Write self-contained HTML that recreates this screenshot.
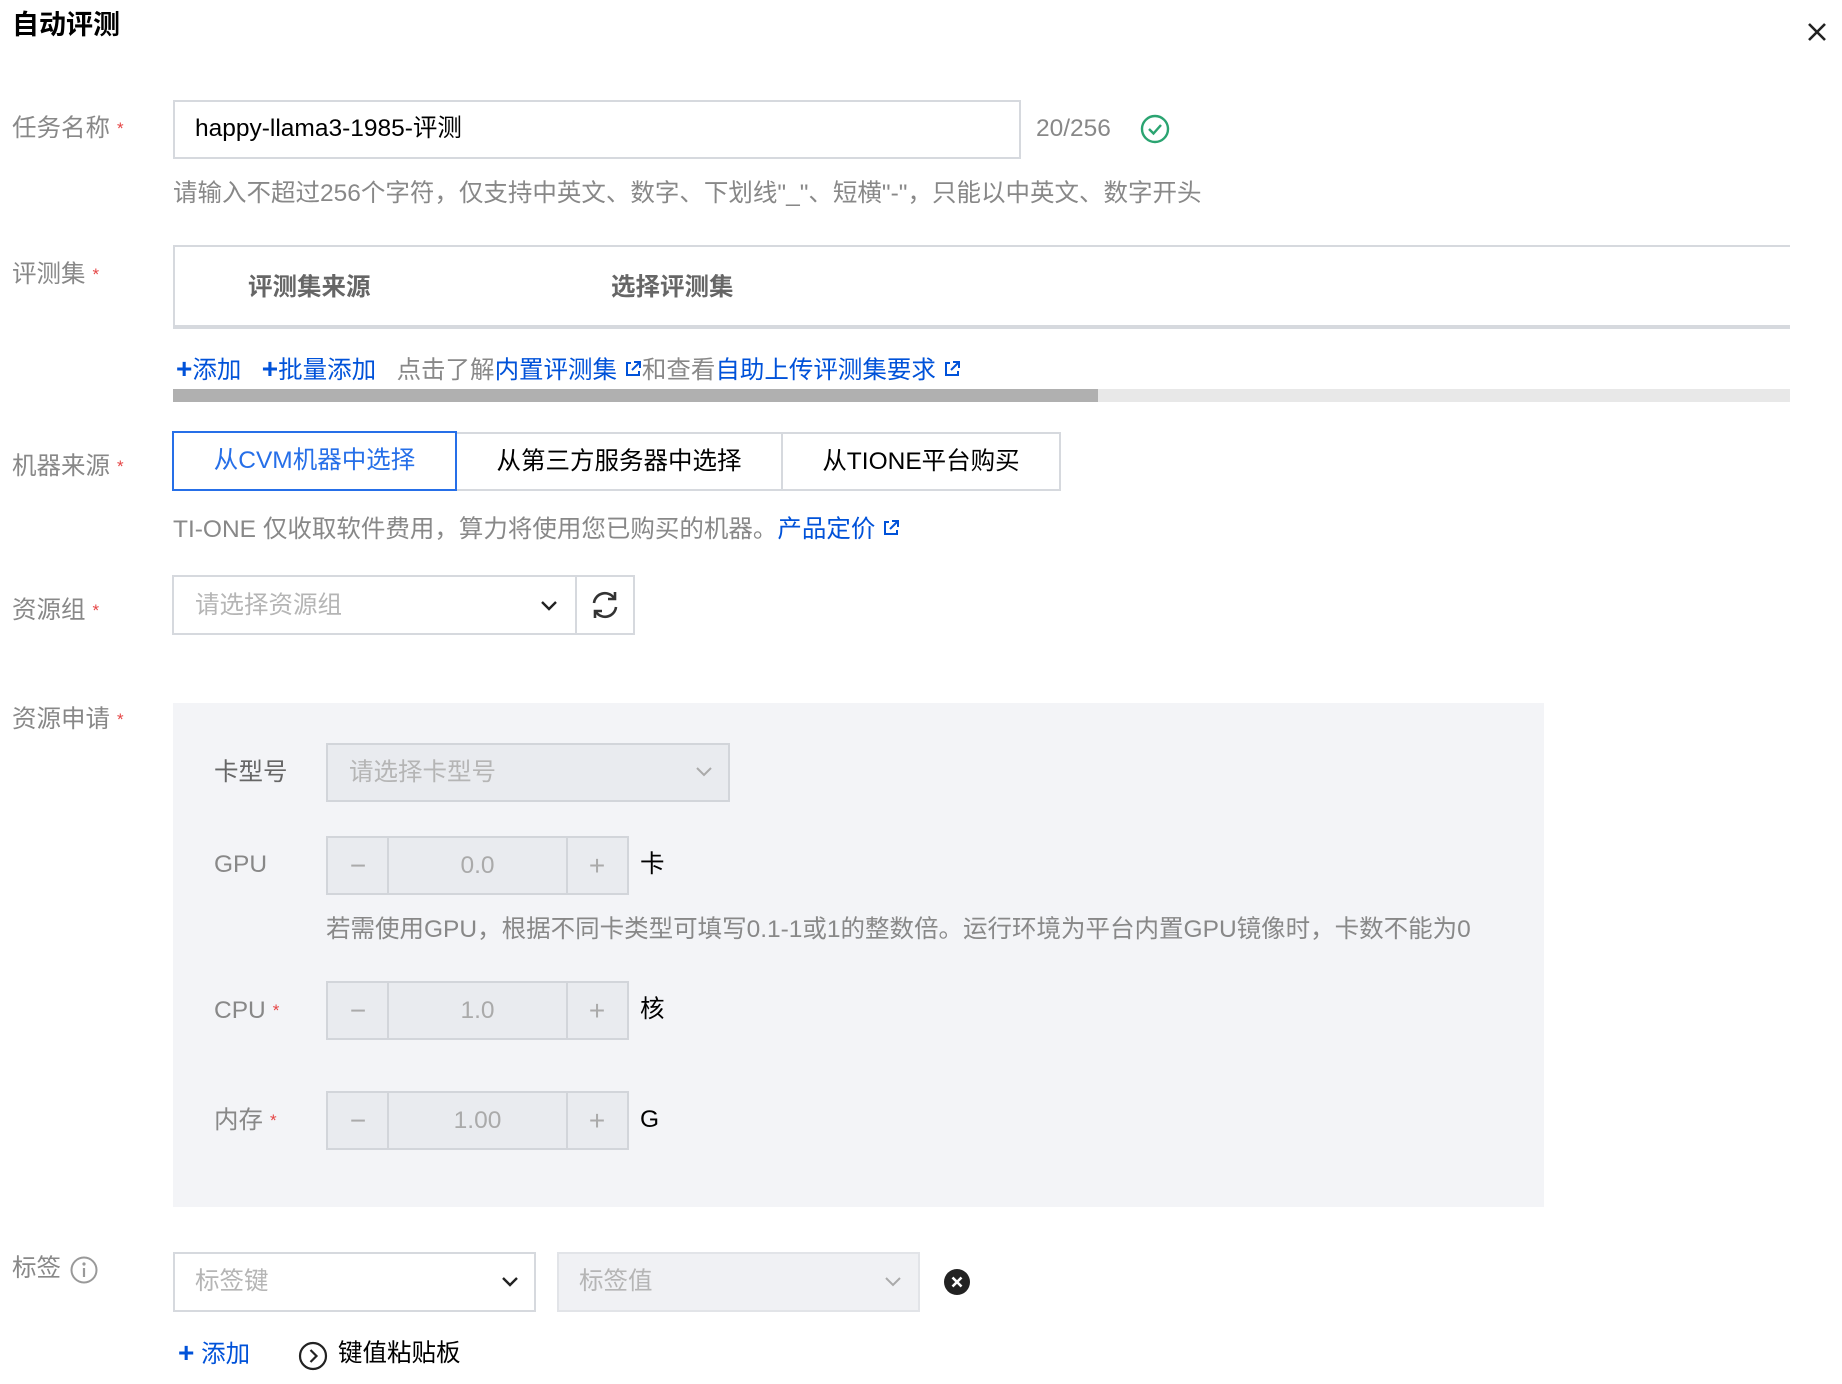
<!DOCTYPE html>
<html><head><meta charset="utf-8"><style>
*{margin:0;padding:0;box-sizing:border-box}
body{width:1842px;height:1384px;background:#fff;position:relative;overflow:hidden;font-family:"Liberation Sans","Noto Sans CJK SC",sans-serif;font-size:24.5px;color:#000;line-height:1.2}
.a{position:absolute;white-space:nowrap}
.lbl{color:#888}
.req{color:#e54545;font-size:17px;margin-left:7px;vertical-align:2px}
.box{position:absolute;border:2px solid #d6d9de;background:#fff}
.blue{color:#0052d9}
.gray{color:#888}
.ph{color:#b5b5b5}
.dis{background:#e9ebef;border-color:#d2d5da}
.c{display:flex;align-items:center;justify-content:center}
.st{position:absolute;width:60px;height:55px;display:flex;align-items:center;justify-content:center;color:#aaa;font-size:28px}
</style></head><body>
<div class="a" style="left:12px;top:9px;font-size:27px;font-weight:bold">自动评测</div>
<svg class="a" style="left:1806px;top:21px" width="22" height="22" viewBox="0 0 22 22"><path d="M3 3L19 19M19 3L3 19" stroke="#222" stroke-width="2.6"/></svg>

<div class="a lbl" style="left:12px;top:114px">任务名称<span class="req">*</span></div>
<div class="box" style="left:173px;top:100px;width:848px;height:59px"></div>
<div class="a" style="left:195px;top:114px">happy-llama3-1985-评测</div>
<div class="a gray" style="left:1036px;top:114px">20/256</div>
<svg class="a" style="left:1140px;top:114px" width="30" height="30" viewBox="0 0 30 30"><circle cx="15" cy="15" r="13" fill="none" stroke="#2ba471" stroke-width="2.4"/><path d="M9 15l4.5 4.5L21 11" fill="none" stroke="#2ba471" stroke-width="2.4"/></svg>
<div class="a gray" style="left:173px;top:179px">请输入不超过256个字符，仅支持中英文、数字、下划线"_"、短横"-"，只能以中英文、数字开头</div>

<div class="a lbl" style="left:12px;top:260px">评测集<span class="req">*</span></div>
<div class="a" style="left:173px;top:245px;width:1617px;height:84px;border:2px solid #d6d9de;border-right:none;border-bottom:4px solid #d6d9de"></div>
<div class="a" style="left:248px;top:273px;font-weight:bold;color:#666">评测集来源</div>
<div class="a" style="left:611px;top:273px;font-weight:bold;color:#666">选择评测集</div>
<div class="a" style="left:176px;top:355px"><span class="blue"><b style="font-size:28px;line-height:1">+</b>添加</span>&nbsp;&nbsp;&nbsp;<span class="blue"><b style="font-size:28px;line-height:1">+</b>批量添加</span>&nbsp;&nbsp;&nbsp;<span class="gray">点击了解</span><span class="blue">内置评测集 <svg width="18" height="18" viewBox="0 0 18 18"><path d="M7 3H3v12h12v-4M10 2h6v6M16 2L8 10" fill="none" stroke="#0052d9" stroke-width="2"/></svg></span><span class="gray">和查看</span><span class="blue">自助上传评测集要求 <svg width="18" height="18" viewBox="0 0 18 18"><path d="M7 3H3v12h12v-4M10 2h6v6M16 2L8 10" fill="none" stroke="#0052d9" stroke-width="2"/></svg></span></div>
<div class="a" style="left:173px;top:389px;width:1617px;height:13px;background:#e8e8e8"></div>
<div class="a" style="left:173px;top:389px;width:925px;height:13px;background:#b0b0b0"></div>

<div class="a lbl" style="left:12px;top:452px">机器来源<span class="req">*</span></div>
<div class="box c" style="left:455px;top:432px;width:328px;height:59px;color:#000">从第三方服务器中选择</div>
<div class="box c" style="left:781px;top:432px;width:280px;height:59px;color:#000">从TIONE平台购买</div>
<div class="box c" style="left:172px;top:431px;width:285px;height:60px;border-color:#266fe8;color:#266fe8">从CVM机器中选择</div>
<div class="a gray" style="left:173px;top:515px">TI-ONE 仅收取软件费用，算力将使用您已购买的机器。<span class="blue">产品定价 <svg width="18" height="18" viewBox="0 0 18 18"><path d="M7 3H3v12h12v-4M10 2h6v6M16 2L8 10" fill="none" stroke="#0052d9" stroke-width="2"/></svg></span></div>

<div class="a lbl" style="left:12px;top:596px">资源组<span class="req">*</span></div>
<div class="box" style="left:172px;top:575px;width:405px;height:60px"></div>
<div class="box" style="left:575px;top:575px;width:60px;height:60px"></div>
<div class="a ph" style="left:195px;top:591px">请选择资源组</div>
<svg class="a" style="left:540px;top:600px" width="18" height="12" viewBox="0 0 18 12"><path d="M2 2l7 7 7-7" fill="none" stroke="#222" stroke-width="2.4"/></svg>
<svg class="a" style="left:589px;top:589px" width="32" height="32" viewBox="0 0 32 32"><path d="M5 14A11 11 0 0 1 25 9M27 18A11 11 0 0 1 7 23" fill="none" stroke="#333" stroke-width="2.6"/><path d="M26 3v7h-7M6 29v-7h7" fill="none" stroke="#333" stroke-width="2.6"/></svg>

<div class="a lbl" style="left:12px;top:705px">资源申请<span class="req">*</span></div>
<div class="a" style="left:173px;top:703px;width:1371px;height:504px;background:#f3f4f7"></div>
<div class="a" style="left:214px;top:758px;color:#666">卡型号</div>
<div class="box dis" style="left:326px;top:743px;width:404px;height:59px"></div>
<div class="a ph" style="left:349px;top:758px">请选择卡型号</div>
<svg class="a" style="left:696px;top:767px" width="16" height="10" viewBox="0 0 16 10"><path d="M1 1l7 7 7-7" fill="none" stroke="#aaa" stroke-width="2"/></svg>

<div class="a" style="left:214px;top:850px;color:#888">GPU</div>
<div class="a" style="left:214px;top:996px;color:#888">CPU<span class="req">*</span></div>
<div class="a" style="left:214px;top:1106px;color:#888">内存<span class="req">*</span></div>
<div class="a gray" style="left:326px;top:915px">若需使用GPU，根据不同卡类型可填写0.1-1或1的整数倍。运行环境为平台内置GPU镜像时，卡数不能为0</div>

<div class="box dis" style="left:326px;top:836px;width:303px;height:59px"></div>
<div class="a" style="left:387px;top:838px;width:2px;height:55px;background:#d2d5da"></div>
<div class="a" style="left:566px;top:838px;width:2px;height:55px;background:#d2d5da"></div>
<div class="st" style="left:328px;top:838px">−</div><div class="st" style="left:389px;top:838px;width:177px;font-size:24.5px">0.0</div><div class="st" style="left:567px;top:838px">+</div>
<div class="a" style="left:640px;top:850px">卡</div>

<div class="box dis" style="left:326px;top:981px;width:303px;height:59px"></div>
<div class="a" style="left:387px;top:983px;width:2px;height:55px;background:#d2d5da"></div>
<div class="a" style="left:566px;top:983px;width:2px;height:55px;background:#d2d5da"></div>
<div class="st" style="left:328px;top:983px">−</div><div class="st" style="left:389px;top:983px;width:177px;font-size:24.5px">1.0</div><div class="st" style="left:567px;top:983px">+</div>
<div class="a" style="left:640px;top:995px">核</div>

<div class="box dis" style="left:326px;top:1091px;width:303px;height:59px"></div>
<div class="a" style="left:387px;top:1093px;width:2px;height:55px;background:#d2d5da"></div>
<div class="a" style="left:566px;top:1093px;width:2px;height:55px;background:#d2d5da"></div>
<div class="st" style="left:328px;top:1093px">−</div><div class="st" style="left:389px;top:1093px;width:177px;font-size:24.5px">1.00</div><div class="st" style="left:567px;top:1093px">+</div>
<div class="a" style="left:640px;top:1105px">G</div>

<div class="a lbl" style="left:12px;top:1254px">标签</div>
<svg class="a" style="left:69px;top:1255px" width="30" height="30" viewBox="0 0 30 30"><circle cx="15" cy="15" r="12.5" fill="none" stroke="#999" stroke-width="2"/><circle cx="15" cy="9" r="1.6" fill="#999"/><path d="M15 13v9" stroke="#999" stroke-width="2.2"/></svg>
<div class="box" style="left:173px;top:1252px;width:363px;height:60px"></div>
<div class="a ph" style="left:195px;top:1267px">标签键</div>
<svg class="a" style="left:501px;top:1276px" width="18" height="12" viewBox="0 0 18 12"><path d="M2 2l7 7 7-7" fill="none" stroke="#222" stroke-width="2.4"/></svg>
<div class="box dis" style="left:557px;top:1252px;width:363px;height:60px;background:#f0f1f4;border-color:#e2e4e8"></div>
<div class="a ph" style="left:579px;top:1267px">标签值</div>
<svg class="a" style="left:885px;top:1277px" width="16" height="10" viewBox="0 0 16 10"><path d="M1 1l7 7 7-7" fill="none" stroke="#aaa" stroke-width="2"/></svg>
<svg class="a" style="left:943px;top:1268px" width="28" height="28" viewBox="0 0 28 28"><circle cx="14" cy="14" r="13" fill="#222"/><path d="M9.5 9.5l9 9M18.5 9.5l-9 9" stroke="#fff" stroke-width="2.6"/></svg>
<div class="a blue" style="left:178px;top:1339px"><b style="font-size:28px;line-height:1">+</b> 添加</div>
<svg class="a" style="left:298px;top:1341px" width="30" height="30" viewBox="0 0 30 30"><circle cx="15" cy="15" r="13" fill="none" stroke="#222" stroke-width="2.2"/><path d="M12.5 9l6 6-6 6" fill="none" stroke="#222" stroke-width="2.2"/></svg>
<div class="a" style="left:338px;top:1339px">键值粘贴板</div>
</body></html>
